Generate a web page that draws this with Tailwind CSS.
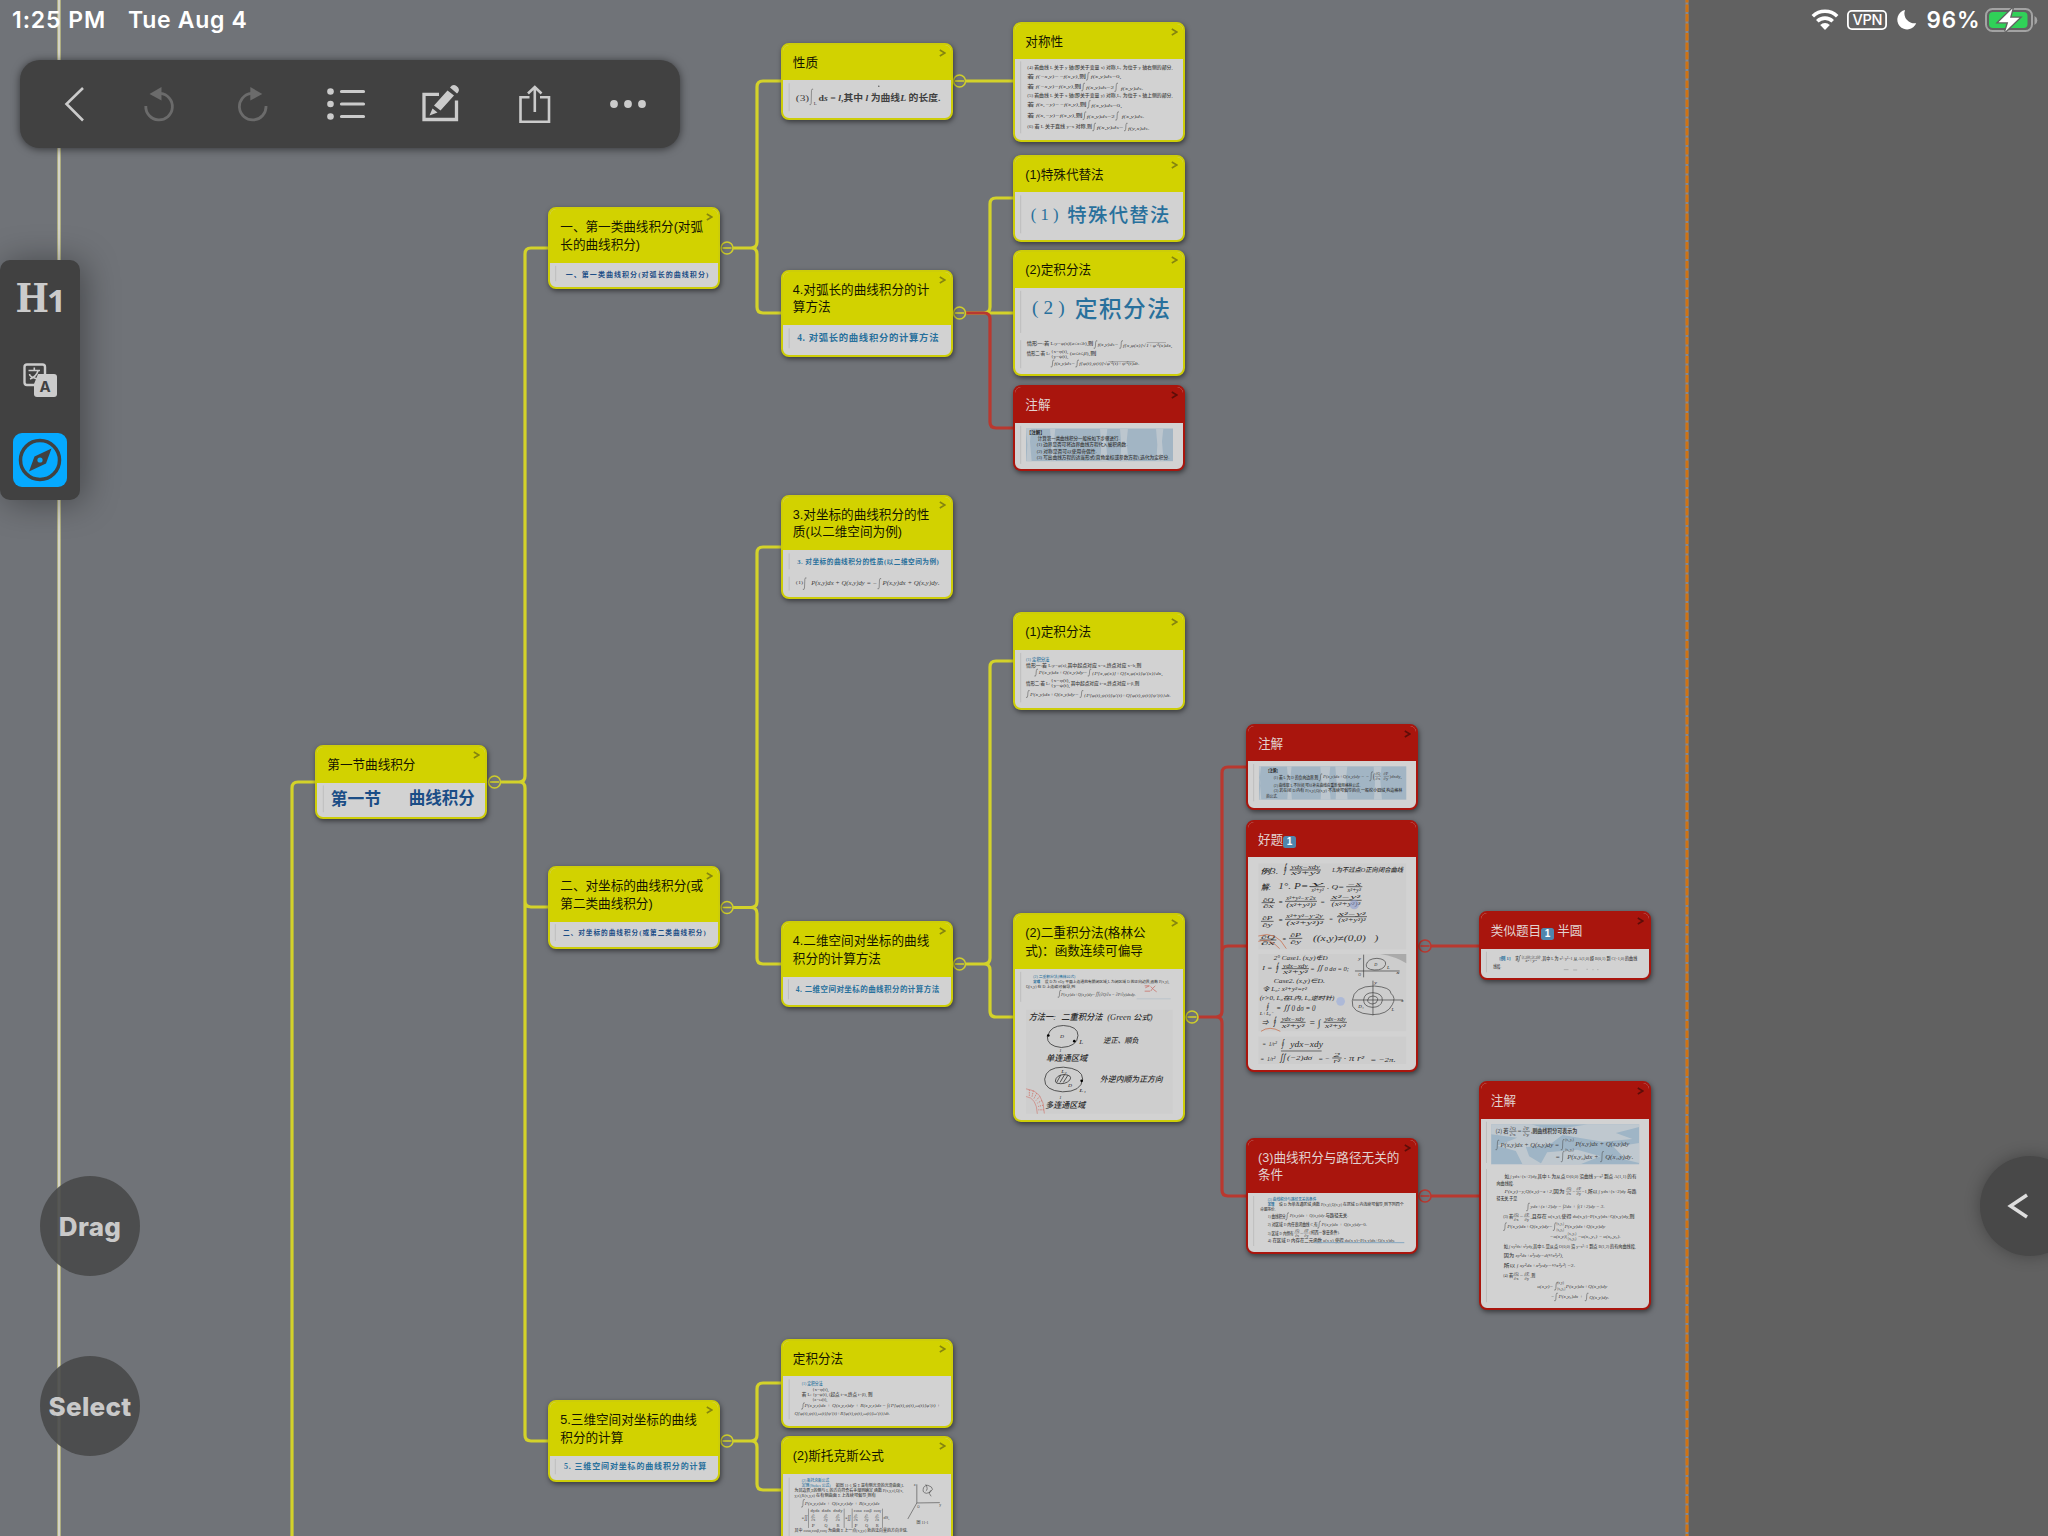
<!DOCTYPE html>
<html lang="zh-CN">
<head>
<meta charset="utf-8">
<title>曲线积分</title>
<script src="https://cdn.jsdelivr.net/npm/@tailwindcss/browser@4"></script>
</head>
<body class="w-[2048px] h-[1536px] overflow-hidden bg-[#707378]">
<main class="relative w-[2048px] h-[1536px] overflow-hidden font-['Inter','Noto_Sans_CJK_SC',sans-serif]">
  <!-- side panel and page guides -->
  <div class="absolute left-[1688px] top-0 w-[360px] h-full bg-[#616161]"></div>
  <svg class="absolute inset-0" width="2048" height="1536" fill="none">
    <path d="M1687 0V1536" stroke="#85888e" stroke-width="3"/>
    <path d="M1687 0V1536" stroke="#cf7212" stroke-width="3" stroke-dasharray="7.500 2" stroke-dashoffset="5"/>
    <path d="M59 0V1536" stroke="#a9a878" stroke-width="4"/>
    <path d="M59 0V1536" stroke="#d3d3c8" stroke-width="2.2"/>
    <g stroke="#d3d22a" stroke-width="3.2">
      <path d="M315 782H298q-6 0-6 6V1536"/>
      <path d="M501 782H519q6 0 6-6V254q0-6 6-6H549M501 782H519q6 0 6 6V901q0 6 6 6H549M525 800V1435q0 6 6 6H549"/>
      <path d="M733 248H751q6 0 6-6V87q0-6 6-6H781M751 248q6 0 6 6V307q0 6 6 6H781"/>
      <path d="M733 907.5H751q6 0 6-6V553q0-6 6-6H781M751 907.5q6 0 6 6V958q0 6 6 6H781"/>
      <path d="M733 1441H751q6 0 6-6V1389q0-6 6-6H781M751 1441q6 0 6 6V1484q0 6 6 6H781"/>
      <path d="M965 81H1014M965 313H1014M984 313q6 0 6-6V204q0-6 6-6H1014"/>
      <path d="M965 964H984q6 0 6-6V667q0-6 6-6H1014M984 964q6 0 6 6V1011q0 6 6 6H1014"/>
    </g>
    <g stroke="#b9382f" stroke-width="3.2">
      <path d="M965 313H984q6 0 6 6V422q0 6 6 6H1014"/>
      <path d="M1198 1017H1216q6 0 6-6V773q0-6 6-6H1247M1222 960V952q0-6 6-6H1247M1216 1017q6 0 6 6V1190q0 6 6 6H1247"/>
      <path d="M1431 946H1480M1431 1196H1480"/>
    </g>
    <g id="joints" fill="#707378" stroke-width="1.6"></g>
  </svg>

  <div id="cards"></div>

  <!-- status bar -->
  <header class="absolute inset-x-0 top-0 h-10 flex items-center justify-between text-white font-semibold text-[23px] leading-10">
    <div class="flex pl-3 gap-[22px]"><span class="tracking-[0.9px]">1:25 PM</span><span class="tracking-[0.7px]">Tue Aug 4</span></div>
    <svg width="240" height="40" viewBox="1808 0 240 40" fill="none">
      <g stroke="#fff" stroke-width="3.6"><path d="M1812.8 16.2a17.6 17.6 0 0 1 24.4 0"/><path d="M1817.3 21.3a11 11 0 0 1 15.4 0"/></g>
      <path d="M1825 30l-4.8-5a6.8 6.8 0 0 1 9.6 0z" fill="#fff"/>
      <rect x="1847.9" y="10.9" width="38.2" height="18.2" rx="4" stroke="#fff" stroke-width="1.8"/>
      <text x="1852.5" y="25.4" font-size="14.5" textLength="30" fill="#fff" font-weight="500">VPN</text>
      <path d="M1905 10a9.8 9.8 0 1 0 11.2 13.2a10 10 0 0 1-11.2-13.2z" fill="#fff"/>
      <text x="1926.5" y="28" font-size="22.5" textLength="53" fill="#fff" font-weight="600">96%</text>
      <rect x="1986" y="9" width="46" height="22" rx="6.5" stroke="#a3a3a3" stroke-width="2"/>
      <path d="M2034.5 16a5 5 0 0 1 0 9z" fill="#a3a3a3"/>
      <rect x="1989" y="12" width="38.500" height="16" rx="4" fill="#30d158"/>
      <path d="M2012.500 8.500L1998.500 22.200H2008.200L2005.300 31.500L2019.500 17.800H2010z" fill="#fff" stroke="#616161" stroke-width="2.6" paint-order="stroke"/>
    </svg>
  </header>

  <!-- toolbar -->
  <nav class="absolute left-5 top-[60px] w-[660px] h-[88px] rounded-[20px] bg-[#414141] shadow-[0_1px_9px_rgba(0,0,0,0.55)]">
    <svg width="660" height="88" viewBox="20 60 660 88" fill="none" stroke="#cbcbcb" stroke-width="2.6">
      <path d="M83 88L66.500 104L83 120.500"/>
      <g stroke="#6b6b6b" stroke-width="2.800"><path d="M145.800 106a13.300 13.300 0 1 0 14.600-12.600"/><path d="M161.500 87v13.500l-12-6.500z" fill="#6b6b6b" stroke="none"/>
      <path d="M266 106a13.300 13.300 0 1 1-14.600-12.600"/><path d="M250.300 87v13.500l12-6.500z" fill="#6b6b6b" stroke="none"/></g>
      <path d="M341.500 91.500H363.500M341.500 104H363.500M341.500 116.500H363.500" stroke-width="3.200" stroke-linecap="round"/>
      <g fill="#cbcbcb" stroke="none"><circle cx="330.500" cy="91.500" r="3.300"/><circle cx="330.500" cy="104" r="3.300"/><circle cx="330.500" cy="116.500" r="3.300"/>
      <circle cx="614" cy="104" r="3.900"/><circle cx="628" cy="104" r="3.900"/><circle cx="642" cy="104" r="3.900"/></g>
      <path d="M439 94.300H424V119.500H456.500V100.500" stroke-width="3.300"/>
      <path d="M447.500 90.500L454 95.500L440.500 110.500L434 105.500zM450 87.500q3-4 6.500-1.500q4 3 1.500 6.500l-1 1zM432.500 108.500l5 4l-8 3z" fill="#cbcbcb" stroke="none"/>
      <path d="M529.500 97.300H520.500V121.700H549V97.300H540M534.800 112V88M528 93.500L534.800 87L541.500 93.500"/>
    </svg>
  </nav>

  <aside class="absolute left-0 top-[260px] w-20 h-60 rounded-[10px] bg-[#414141] shadow-[4px_2px_34px_rgba(0,0,0,0.4)]">
    <svg width="80" height="240" viewBox="0 260 80 240" fill="none">
      <text x="15.500" y="312" font-size="38.500" font-weight="700" fill="#cbcbcb" textLength="33.500" lengthAdjust="spacingAndGlyphs" class="font-['DejaVu_Serif',serif]">H</text>
      <text x="47" y="311.500" font-size="31" font-weight="700" fill="#cbcbcb" textLength="19" lengthAdjust="spacingAndGlyphs" class="font-['Open_Sans',sans-serif]">1</text>
      <rect x="24.500" y="364.500" width="20.500" height="20.500" rx="2.500" stroke="#cbcbcb" stroke-width="2.400"/>
      <path d="M28.500 370.500H40M34.300 367.500V370.500M29.500 374q0 3 8 5M38 371q-2 6-8 8" stroke="#cbcbcb" stroke-width="1.600"/>
      <path d="M38 374H54a3 3 0 0 1 3 3v17a3 3 0 0 1-3 3H37a3 3 0 0 1-3-3V384z" fill="#cbcbcb"/>
      <text x="39.500" y="391.500" font-size="15" font-weight="700" fill="#414141">A</text>
      <rect x="13" y="433" width="54" height="54" rx="9" fill="#05a9ff"/>
      <circle cx="40" cy="460" r="19.500" stroke="#414141" stroke-width="3.500"/>
      <path d="M51.500 448.500L46 463.500L29 471.500L34.500 456.500z" fill="#414141"/><circle cx="40" cy="460" r="2.600" fill="#05a9ff"/>
    </svg>
  </aside>

  <button class="absolute left-10 top-[1176px] size-[100px] rounded-full bg-[#484949]/90 text-[#c9c9c9] font-extrabold text-[26px] tracking-[0.3px]">Drag</button>
  <button class="absolute left-10 top-[1356px] size-[100px] rounded-full bg-[#484949]/90 text-[#c9c9c9] font-extrabold text-[26px] tracking-[0.3px]">Select</button>
  <button class="absolute left-[1980px] top-[1156px] size-[100px] rounded-full bg-[#484848] shadow-[0_0_16px_rgba(0,0,0,0.3)]">
    <svg width="100" height="100" viewBox="0 0 100 100" fill="none" stroke="#dedede" stroke-width="3.500"><path d="M47 39L30.500 50L47 61"/></svg>
  </button>
</main>

<script>
const INK = '#3f3f3f', BLUE = '#28709c', NAVY = '#1b4d86';

// line of printed text: left, vertical centre, size, text, drawn length
const T = (x, cy, s, str, len, fill = INK, w = 500) =>
  `<text x="${x}" y="${cy + s * 0.35}" font-size="${s}" textLength="${len}" lengthAdjust="spacingAndGlyphs" fill="${fill}" font-weight="${w}">${str}</text>`;
// heading spread over its length without stretching the glyphs
const S = (x, cy, s, str, len, fill = BLUE, w = 500) =>
  `<text x="${x}" y="${cy + s * 0.35}" font-size="${s}" textLength="${len}" fill="${fill}" font-weight="${w}">${str}</text>`;
// handwritten text
const H = (x, cy, s, str, len) =>
  `<text x="${x}" y="${cy + s * 0.35}" font-size="${s}" textLength="${len}" lengthAdjust="spacingAndGlyphs" fill="#2c2c2c" font-style="italic" font-weight="500">${str}</text>`;
// handwritten fraction
const F = (x, cy, w, a, b) => H(x + 4, cy - 9, 17, a, w - 8) + H(x + 4, cy + 10, 17, b, w - 8) +
  `<path d="M${x} ${cy}h${w}" stroke="#2c2c2c" stroke-width="2"/>`;
const I = (x, y, h) => `<path d="M${x + 6} ${y + 2}q-4-3-5 4L${x} ${y + h - 6}q-1 7-5 4" fill="none" stroke="#444" stroke-width="1.5"/>`;
// left margin mark of a clipped excerpt
const M = (x, y, h) => `<path d="M${x} ${y}v${h}" stroke="#b4b4b4" stroke-width="2"/>`;
const wash = (x, y, w, h, bands) => `<rect x="${x}" y="${y}" width="${w}" height="${h}" fill="#a2b5c4"/>` +
  bands.map(([bx, bw]) => `<path d="M${bx} ${y}h${bw}l-4 ${h * .4}l5 ${h * .6}h-${bw}l3-${h * .5}z" fill="#bcc6ce"/>`).join('');

const Y = 'y', R = 'r', ONE = '<span class="inline-flex items-center justify-center align-[-1.5px] w-[12.5px] h-[12.5px] rounded-[2.5px] bg-[#4f86ad] text-white text-[10px] leading-none font-bold">1</span>';

const cards = [
 { x:315,y:745,h:74,hd:37.500,c:Y,t:'第一节曲线积分',o:[280,720],
   s:M(130,195,80)+T(152,236,50,'第一节',151,NAVY,600)+T(386,232,50,'曲线积分',198,NAVY,600) },
 { x:548,y:207.300,h:82,hd:55.500,c:Y,t:'一、第一类曲线积分(对弧<br>长的曲线积分)',o:[0,0],
   s:M(1667,797,46)+S(1697,822,21,'一、第一类曲线积分(对弧长的曲线积分)',428,NAVY,700) },
 { x:548,y:866.300,h:83,hd:55.500,c:Y,t:'二、对坐标的曲线积分(或<br>第二类曲线积分)',o:[280,720],
   s:M(826,612,50)+S(849,638,20,'二、对坐标的曲线积分(或第二类曲线积分)',428,NAVY,700) },
 { x:548,y:1400.200,h:82,hd:55.500,c:Y,t:'5.三维空间对坐标的曲线<br>积分的计算',o:[540,1330],
   s:M(46,386,46)+S(72,409,24,'5. 三维空间对坐标的曲线积分的计算',427,BLUE,700) },
 { x:780.500,y:42.600,h:77,hd:37.500,c:Y,t:'性质',o:[760,0],
   s:M(86,250,84)+T(106,294,25,'(3)',40)+I(152,266,50)+T(160,312,12,'L',9)+T(174,295,26,'<tspan>d</tspan><tspan font-style="italic">s</tspan> = <tspan font-style="italic">l</tspan>,其中 <tspan font-style="italic">l</tspan> 为曲线<tspan font-style="italic">L</tspan> 的长度.',366,INK,600)+'<circle cx="355" cy="259" r="2" fill="#444"/>' },
 { x:780.500,y:269.500,h:87.500,hd:55.500,c:Y,t:'4.对弧长的曲线积分的计<br>算方法',o:[760,0],
   s:M(86,985,60)+S(110,1013,28,'4. 对弧长的曲线积分的计算方法',424,BLUE,700) },
 { x:780.500,y:494.500,h:104,hd:55.500,c:Y,t:'3.对坐标的曲线积分的性<br>质(以二维空间为例)',o:[760,480],
   s:M(86,220,48)+S(110,245,20,'3. 对坐标的曲线积分的性质(以二维空间为例)',425,BLUE,700)+M(86,290,42)+T(106,308,15,'(1)',22)+I(132,292,38)+T(152,309,17,'<tspan font-style="italic">P(x,y)dx + Q(x,y)dy = −</tspan>',198)+I(356,294,34)+T(366,310,17,'<tspan font-style="italic">P(x,y)dx + Q(x,y)dy</tspan>.',171) },
 { x:780.500,y:921.200,h:86,hd:55.500,c:Y,t:'4.二维空间对坐标的曲线<br>积分的计算方法',o:[280,720],
   s:M(1524,777,60)+S(1546,808,22.500,'4. 二维空间对坐标的曲线积分的计算方法',430,BLUE,700) },
 { x:780.500,y:1338.500,h:89,hd:37.500,c:Y,t:'定积分法',o:[540,1330],
   s:M(746,148,120)+T(784,161,13,'(1) 定积分法',62,BLUE)+T(815,177,13,'{x=φ(t),',50)+T(784,192,13,'若 L: {y=ψ(t), (起点 t=α,终点 t=β), 则',212)+T(815,208,13,'{z=ω(t),',46)+I(787,217,22)+T(792,227,15,'<tspan font-style="italic">P(x,y,z)dx + Q(x,y,z)dy + R(x,y,z)dz</tspan> = ∫<tspan font-style="italic">{P[φ(t),ψ(t),ω(t)]φ′(t) +</tspan>',408)+T(762,251,14,'<tspan font-style="italic">Q[φ(t),ψ(t),ω(t)]ψ′(t)+R[φ(t),ψ(t),ω(t)]ω′(t)}dt</tspan>.',286) },
 { x:780.500,y:1436.200,h:130,hd:37.500,c:Y,t:'(2)斯托克斯公式',o:[540,1330],
   s:M(746,442,180)+T(784,452,12,'(2) 斯托克斯公式',82,BLUE)+T(784,467,12,'定理(Stokes 公式)',86,BLUE)+T(886,467,12,'如图 11-1,设 Σ 是有侧光滑的光滑曲面,L',204)+T(762,482,12,'为其边界,Σ的侧与 L 的方向符合右手规则确定,函数 P(x,y,z),Q(x,',326)+T(762,497,12,'y,z),R(x,y,z) 在有侧曲面 Σ 上连续可偏导,则有',244)+I(787,506,26)+T(793,519,15,'<tspan font-style="italic">P(x,y,z)dx + Q(x,y,z)dy + R(x,y,z)dz</tspan>',224)
    +T(784,562,18,'=∬',18)+T(914,562,18,'=∬',18)+'<path d="M804 535v58M911 535v58M935 535v58M1026 535v58" stroke="#555" stroke-width="1.500"/>'
    +T(810,541,12,'dydz&#160; dzdx&#160; dxdy',96)+T(940,541,12,'cosα&#160; cosβ&#160; cosγ',82)
    +[818,856,892,946,978,1010].map((x,i)=>T(x-5,556,11,'∂',9)+T(x-6,569,11,['∂x','∂y','∂z'][i%3],12)+`<path d="M${x-7} 562h13" stroke="#555"/>`+T(x-4,585,12,'PQR'[i%3],9)).join('')
    +T(1029,562,13,'dS,',18)+T(762,602,12,'其中 cosα,cosβ,cosγ 为曲面 Σ 上一点(x,y,z) 处的法向量的方向余弦.',340)
    +'<path d="M1129 462V518L1102 566M1129 518L1198 517M1148 478q0-12 14-13q14 4 14 12q-6 12-18 12q-12-2-10-11M1156 462q8 16 0 20M1170 480q-8 10 2 18" fill="none" stroke="#444" stroke-width="1.800"/>'+T(1120,462,12,'z',6)+T(1196,522,12,'y',6)+T(1130,529,10,'O',7)+T(1128,576,12,'图 11-1',36) },
 { x:1013,y:21.500,h:120,hd:37.500,c:Y,t:'对称性',o:[1000,0],
   s:M(62,184,216)+T(82,203,13,'(4) 若曲线 L 关于 y 轴(即关于变量 x) 对称,L₁ 为位于 y 轴右侧的部分,',436)+T(82,228,14,'若 <tspan font-style="italic">f(−x,y)=−f(x,y)</tspan>,则',176)+I(263,216,26)+T(272,230,14,'<tspan font-style="italic">f(x,y)ds</tspan>=0,',92)
    +T(82,260,14,'若 <tspan font-style="italic">f(−x,y)=f(x,y)</tspan>,则',162)+I(249,248,26)+T(258,262,14,'<tspan font-style="italic">f(x,y)ds</tspan>=2',84)+I(348,248,28)+T(362,264,14,'<tspan font-style="italic">f(x,y)ds</tspan>.',68)
    +T(82,287,13,'(5) 若曲线 L 关于 x 轴(即关于变量 y) 对称,L₁ 为位于 x 轴上侧的部分,',436)+T(82,313,14,'若 <tspan font-style="italic">f(x,−y)=−f(x,y)</tspan>,则',178)+I(266,300,26)+T(274,315,14,'<tspan font-style="italic">f(x,y)ds</tspan>=0,',92)
    +T(82,346,14,'若 <tspan font-style="italic">f(x,−y)=f(x,y)</tspan>,则',166)+I(253,334,26)+T(260,348,14,'<tspan font-style="italic">f(x,y)ds</tspan>=2',84)+I(351,334,28)+T(365,350,14,'<tspan font-style="italic">f(x,y)ds</tspan>.',68)
    +T(82,380,14,'(6) 若 L 关于直线 y=x 对称,则',194)+I(282,368,26)+T(290,382,14,'<tspan font-style="italic">f(x,y)ds</tspan>=',80)+I(377,368,26)+T(384,384,14,'<tspan font-style="italic">f(y,x)ds</tspan>.',64) },
 { x:1013,y:154.500,h:87,hd:37.500,c:Y,t:'(1)特殊代替法',o:[1000,0],
   s:M(62,586,114)+S(92,642,50,'(1)',84)+S(202,646,58,'特殊代替法',306) },
 { x:1013,y:250.300,h:126,hd:37.500,c:Y,t:'(2)定积分法',o:[1000,230],
   s:M(62,182,126)+S(96,232,58,'(2)',98)+S(224,238,68,'定积分法',286)+M(62,330,84)
    +T(80,341,13,'情形一:若 L:<tspan font-style="italic">y=φ(x)</tspan>(<tspan font-style="italic">a≤x≤b</tspan>),则',200)+I(286,330,26)+T(293,343,14,'<tspan font-style="italic">f(x,y)ds=</tspan>',62)+I(363,330,26)+T(369,345,14,'<tspan font-style="italic">f[x,φ(x)]√1+φ′²(x)dx</tspan>,',148)
    +T(80,369,13,'情形二:若 L:',70)+T(153,363,12,'{x=φ(t),',52)+T(153,378,12,'{y=ψ(t),',52)+T(209,371,14,'(<tspan font-style="italic">α≤t≤β</tspan>),则',80)+I(157,388,24)+T(163,400,14,'<tspan font-style="italic">f(x,y)ds=</tspan>',62)+I(231,388,24)+T(238,401,14,'<tspan font-style="italic">f[φ(t),ψ(t)]√φ′²(t)+ψ′²(t)dt</tspan>.',180)
    +'<path d="M440 337h58M325 394h80" stroke="#555"/>' },
 { x:1013,y:385,h:86,hd:37.500,c:R,t:'注解',o:[1000,230],
   s:M(62,586,114)+wash(78,594,441,98,[[78,16],[150,16],[300,22],[360,24],[468,22]])+T(80,604,15,'【注解】',54,'#222',700)+T(113,624,13,'计算第一类曲线积分一般按如下步骤进行.',246,'#333')+T(110,643,13,'(1) 边界是否可将边界曲线方程代入被积函数.',272,'#333')+T(110,662,13,'(2) 对称是否可以使用奇偶性.',180,'#333')+T(110,680,13,'(3) 写出曲线方程的适当形式(直角坐标或参数方程),选代为定积分.',398,'#333') },
 { x:1013,y:612.200,h:98,hd:37.500,c:Y,t:'(1)定积分法',o:[760,480],
   s:M(782,518,148)+T(798,537,13,'(1) 定积分法',70,BLUE)+T(798,554,14,'情形一:若 L:<tspan font-style="italic">y=φ(x)</tspan>,其中起点对应 x=a,终点对应 x=b,则',346)+I(828,565,24)+T(836,577,15,'<tspan font-style="italic">P(x,y)dx+Q(x,y)dy=</tspan>',146)+I(988,565,24)+T(996,578,15,'<tspan font-style="italic">{P[x,φ(x)]+Q[x,φ(x)]φ′(x)}dx</tspan>,',212)
    +T(798,608,14,'情形二:若 L:',72)+T(872,600,13,'{x=φ(t),',58)+T(872,617,13,'{y=ψ(t),',58)+T(932,609,14,'其中起点对应 t=α,终点对应 t=β,则',206)+I(803,629,24)+T(810,641,15,'<tspan font-style="italic">P(x,y)dx+Q(x,y)dy=</tspan>',146)+I(964,629,24)+T(972,644,15,'<tspan font-style="italic">{P[φ(t),ψ(t)]φ′(t)+Q[φ(t),ψ(t)]ψ′(t)}dt</tspan>.',260) },
 { x:1013,y:913,h:208.500,hd:55.500,c:Y,t:'(2)二重积分法(格林公<br>式)：函数连续可偏导',o:[980,900],
   s:M(122,214,90)+'<rect x="138" y="328" width="440" height="312" fill="#cecece"/>'+T(160,228,11,'(2) 二重积分法(格林公式)',126,BLUE)+T(160,243,11,'定理',20,BLUE,700)+T(194,243,11,'设 D 为 xOy 平面上连通的有限闭区域,L 为闭区域 D 的正向边界,函数 P(x,y),',374)+T(138,259,11,'Q(x,y) 在 D 上连续可偏导,则',148)+I(238,268,24)+T(243,280,15,'<tspan font-style="italic">P(x,y)dx+Q(x,y)dy=∬(∂Q/∂x − ∂P/∂y)dxdy</tspan>.',224)
    +'<path d="M470 295h102" stroke="#8ba6bb"/><path d="M494 256h14l-12 6M494 272h16M512 272q6-10 14-16M512 258q8 10 18 16" stroke="#c9766f" fill="none" stroke-width="2.500"/>'
    +H(146,350,27,'方法一:',82)+H(244,350,26,'二重积分法',124)+H(382,350,22,'(Green 公式)',136)
    +'<g fill="none" stroke="#333" stroke-width="2.400"><path d="M204 404q8-28 46-29q44 2 44 30q-2 34-50 36q-44-4-42-34zM194 536q4-36 56-36q58 4 58 36q-4 38-60 38q-56-4-54-38zM226 542q2-18 26-20q26 2 18 16q-14 16-40 10z"/><path d="M230 546l12-22M240 546l14-24M250 546l14-22"/></g><circle cx="205" cy="405" r="4"/><circle cx="283" cy="422" r="4"/><circle cx="305" cy="541" r="4"/>'
    +H(240,408,14,'D',12)+H(298,424,16,'L',12)+H(370,420,22,'逆正、顺负',106)+H(198,474,25,'单连通区域',124)+H(244,514,12,'L₂',16)+H(264,554,14,'D',12)+H(298,569,14,'L₁',20)+H(238,450,12,'1',7)+H(238,590,12,'1',7)+H(360,536,24,'外逆内顺为正方向',188)+H(196,615,25,'多连通区域',120)
    +'<g fill="none" stroke="#cf7c74" stroke-width="2"><path d="M138 565q54 4 55 74M138 588q32 4 34 52"/><path d="M148 568v18M160 571l-4 18M170 578l-8 16M179 588l-11 12M186 600l-14 8M190 614l-16 4M192 628h-17" stroke-width="3" stroke-dasharray="4 3"/></g>' },
 { x:1245.700,y:723.500,h:86,hd:37.500,c:R,t:'注解',o:[1220,710],
   s:M(100,162,112)+wash(116,169,442,100,[[116,6],[200,14],[300,30],[345,36],[460,24]])+T(138,180,13,'【注解】',40,'#222',700)+T(160,201,13,'(1) 若 L 为 D 的负向边界,则',134,'#333')+I(300,190,24)+T(308,199,15,'<tspan font-style="italic">P(x,y)dx+Q(x,y)dy = −</tspan>',138)+I(452,184,30)+T(458,199,22,'(',6)+T(466,192,12,'∂Q',14)+T(466,206,12,'∂x',14)+'<path d="M464 199h18M490 199h16" stroke="#444"/>'+T(490,192,12,'∂P',14)+T(490,206,12,'∂y',14)+T(508,199,14,')dxdy,',36)
    +T(160,227,12,'(2) 曲线取 L 不封闭,可以补充曲线应重新使用格林公式.',260,'#333')+T(160,242,12,'(3) 若在闭 D 内有 P(x,y),Q(x,y) 不连续可偏导的点,一般挖小圆域,构造格林',386,'#333')+T(138,260,12,'的公式.',34,'#333') },
 { x:1245.700,y:819.500,h:252.500,hd:37.500,c:R,t:'好题'+ONE,nochev:1,o:[1220,710],
   s:'<g fill="#cdcdcd"><rect x="114" y="460" width="444" height="258"/><rect x="114" y="732" width="444" height="232"/><rect x="114" y="980" width="444" height="82"/></g><path d="M480 732h78v28q-30-20-78-28z" fill="#aaa"/>'
    +H(120,484,22,'例3.',54)+H(184,480,38,'∮',18)+F(208,480,94,'ydx−xdy','x²+y²')+H(336,480,19,'L为不过点O正向闭合曲线',212)
    +H(122,532,24,'解:',30)+H(174,530,22,'1°. P=',90)+F(270,530,44,'y','x²+y²')+H(320,530,20,'. Q=',52)+F(378,530,48,'−x','x²+y²')
    +F(124,578,40,'∂Q','∂x')+H(174,576,22,'=',14)+F(194,574,96,'x²+y²−x·2x','(x²+y²)²')+H(300,574,20,'=',14)+F(330,571,94,'x²−y²','(x²+y²)²')
    +F(122,634,38,'∂P','∂y')+H(174,632,22,'=',14)+F(194,628,118,'x²+y²−y·2y','(x²+y²)²')+H(326,626,20,'=',12)+F(350,620,90,'x²−y²','(x²+y²)²')
    +F(118,690,50,'∂Q','∂x')+H(186,688,22,'=',12)+F(206,685,40,'∂P','∂y')+H(278,686,24,'((x,y)≠(0,0)&#160;&#160; )',196)
    +'<circle cx="402" cy="584" r="14" fill="#8f9fd0" opacity=".6"/><circle cx="361" cy="874" r="13" fill="#9fb0dc" opacity=".7"/>'
    +'<g fill="none" stroke="#c9603a" stroke-width="2"><path d="M114 678q54-18 84 38M114 694q34-12 64 22M122 964q26-18 58 0"/></g>'
    +H(160,743,18,'2° Case1. (x,y)∉D',162)+H(126,774,20,'I =',30)+H(162,774,34,'∮',16)+F(184,776,82,'ydx−xdy','x²+y²')+H(270,776,20,'= ∬ 0 dσ = 0;',116)
    +H(160,814,18,'Case2. (x,y)∈D.',154)+H(126,838,18,'令 L₀: x²+y²=r²',134)+H(118,864,16,'(r&gt;0, L₀在L内, L₀逆时针)',224)+H(134,892,26,'∮',14)+H(118,912,12,'L+L₀⁻',38)+H(168,896,22,'= ∬ 0 dσ = 0',118)
    +H(124,938,22,'⇒',20)+H(154,936,34,'∮',16)+F(180,937,76,'ydx−xdy','x²+y²')+H(266,938,28,'= ∫',34)+F(310,937,70,'ydx−xdy','x²+y²')
    +'<g fill="none" stroke="#3a3a3a" stroke-width="2"><path d="M430 734v68M404 783h134M458 812v104M398 870h150M438 764q4-18 32-19q28 2 26 18q-6 18-34 17q-26-2-24-16zM396 872q4-44 66-44q50 4 50 22q16 14 4 34q-14 30-60 30q-66-4-60-42zM430 870q2-22 28-22q30 2 28 24q-4 20-30 20q-26-2-26-22zM442 870q2-12 16-12q16 2 14 12q-2 12-16 12q-14-2-14-12z"/></g>'
    +H(414,744,14,'y',8)+H(414,792,14,'O',8)+H(528,786,14,'x',10)+H(462,764,12,'D',9)+H(500,772,12,'L',8)+H(414,890,14,'D₁',16)+H(514,900,12,'L',8)+H(542,872,12,'x',8)+H(462,818,12,'y',8)
    +H(126,1002,20,'=&#160; 1/r²',44)+H(178,1002,32,'∮',16)+H(210,1002,24,'ydx−xdy',98)+'<path d="M182 1023h122" stroke="#333" stroke-width="2"/>'
    +H(120,1046,20,'=&#160; 1/r²',46)+H(176,1046,30,'∬',20)+H(200,1044,20,'(−2)dσ',76)+H(294,1046,20,'= −',34)+F(336,1044,28,'2','r²')+H(370,1044,22,'· π r²',62)+H(450,1048,20,'= −2π.',76) },
 { x:1245.700,y:1137.500,h:116.500,hd:55.500,c:R,t:'(3)曲线积分与路径无关的<br>条件',o:[1220,900],
   s:M(100,888,150)+T(142,899,12,'(3) 曲线积分与路径无关的条件',146,BLUE)+T(142,915,12,'定理',20,BLUE,700)+T(176,914,12,'设 D 为单连通区域,函数 P(x,y),Q(x,y) 在区域 D 内连续可偏导,则下列四个',374)+T(120,930,12,'命题等价.',46)
    +T(142,948,13,'1) 曲线积分',54)+I(200,937,24)+T(208,947,14,'<tspan font-style="italic">P(x,y)dx + Q(x,y)dy</tspan> 与路径无关.',176)+T(142,973,13,'2) 对区域 D 内任意闭曲线 C,有',150)+I(296,962,24)+T(304,972,15,'<tspan font-style="italic">P(x,y)dx + Q(x,y)dy</tspan>=0.',136)
    +T(142,999,13,'3) 区域 D 内恒有',78)+T(224,992,12,'∂Q',13)+T(224,1006,12,'∂x',13)+T(239,999,14,'=',10)+T(252,992,12,'∂P',13)+T(252,1006,12,'∂y',13)+'<path d="M222 999h15M250 999h15" stroke="#444"/>'+T(268,998,13,'(柯西－黎曼条件).',90)+T(142,1020,13,'4) 在区域 D 内存在二元函数 u(x,y),使得 du(x,y)=P(x,y)dx+Q(x,y)dy.',382)+'<path d="M280 1028h272" stroke="#86a7c0" stroke-width="3"/>' },
 { x:1478.500,y:911.200,h:69,hd:37.500,c:R,t:'类似题目'+ONE+' 半圆',o:[1220,900],
   s:M(798,154,62)+T(836,174,15,'[例 1]',34,BLUE,700)+T(884,174,13,'求',10)+I(896,164,22)+T(904,168,12,'<tspan font-style="italic">(x+y)dx−(x−y)dy</tspan>',56)+'<path d="M904 175h54" stroke="#555"/>'+T(914,182,12,'<tspan font-style="italic">x²+y²</tspan>',34)+T(962,174,13,',其中 L 为 x²+y²=1 从 A(1,0) 经 B(0,1) 到 C(−1,0) 的曲线',288)+T(818,198,13,'线段.',24)+'<path d="M1030 208h14M1058 209h12M1098 207h4M1116 208h3M1130 208h4" stroke="#999" stroke-width="2"/>' },
 { x:1478.500,y:1081.200,h:228.500,hd:37.500,c:R,t:'注解',o:[1220,900],
   s:M(798,664,124)+'<rect x="812" y="672" width="444" height="120" fill="#9fb5c6"/><path d="M812 672h120l60 18l110-18h154v8l-70 18l50 18l-90 8l-120-20l-40 30l-70 6l10 28l40 24h-60l-20-40l-56-16l60-24l-78-10zM960 792l20-36l90-8l70 20l-60 24zM1180 740l76-12v60l-40-10z" fill="#bfc8cf"/>'
    +T(826,692,18,'(2) 若',38)+T(868,684,15,'∂Q',18)+T(868,702,15,'∂x',18)+T(891,692,18,'=',12)+T(908,684,15,'∂P',18)+T(908,702,15,'∂y',18)+'<path d="M866 693h22M906 693h22" stroke="#333" stroke-width="1.500"/>'+T(932,692,16,',则曲线积分可表示为',138,INK,600)
    +I(830,718,32)+T(840,732,20,'<tspan font-style="italic">P(x,y)dx + Q(x,y)dy =</tspan>',176)+I(1026,716,34)+T(1034,720,10,'(x₁,y₁)',26)+T(1034,748,10,'(x₀,y₀)',26)+T(1064,730,20,'<tspan font-style="italic">P(x,y)dx + Q(x,y)dy</tspan>',162)+T(1006,768,20,'=',12)+I(1026,752,34)+T(1040,769,20,'<tspan font-style="italic">P(x,y₀)dx +</tspan>',94)+I(1144,752,34)+T(1154,769,20,'<tspan font-style="italic">Q(x₁,y)dy</tspan>.',84)
    +M(798,806,400)
    +T(852,828,13,'如,∫ ydx+(x+2)dy,其中 L 为从点 O(0,0) 沿曲线 y=x² 到点 A(1,1) 的有',396)+T(828,850,13,'向曲线段.',52)+T(852,873,13,'<tspan font-style="italic">P(x,y)=y,Q(x,y)=x+2</tspan>,因为',180)+T(1038,866,12,'∂Q',14)+T(1038,880,12,'∂x',14)+T(1056,873,12,'=',8)+T(1068,866,12,'∂P',14)+T(1068,880,12,'∂y',14)+'<path d="M1036 873h16M1066 873h16" stroke="#444"/>'+T(1084,873,13,'=1,所以 ∫ ydx+(x+2)dy 与路',164)+T(828,896,13,'径无关,于是',62)
    +I(922,907,26)+T(930,919,15,'<tspan font-style="italic">ydx+(x+2)dy =</tspan> ∫<tspan font-style="italic">2dx +</tspan> ∫<tspan font-style="italic">(1+2)dy = 3</tspan>.',222)
    +T(848,949,13,'(3) 若',30)+T(880,942,12,'∂Q',14)+T(880,957,12,'∂x',14)+T(898,949,12,'=',10)+T(912,942,12,'∂P',14)+T(912,957,12,'∂y',14)+'<path d="M878 949h17M910 949h17" stroke="#444"/>'+T(930,949,13,',且存在 u(x,y),使得 du(x,y)=P(x,y)dx+Q(x,y)dy,则',312)
    +I(853,966,26)+T(860,979,15,'<tspan font-style="italic">P(x,y)dx+Q(x,y)dy=</tspan>',136)+I(1002,966,26)+T(1008,970,9,'(x₁,y₁)',22)+T(1008,989,9,'(x₀,y₀)',22)+T(1032,979,15,'<tspan font-style="italic">P(x,y)dx+Q(x,y)dy</tspan>',122)+T(988,1008,14,'<tspan font-style="italic">=u(x,y)|</tspan>',52)+T(1042,1001,9,'(x₁,y₁)',26)+T(1042,1016,9,'(x₀,y₀)',26)+T(1072,1009,14,'<tspan font-style="italic">=u(x₁,y₁) − u(x₀,y₀)</tspan>.',128)
    +T(850,1038,13,'如,∫ xy²dx+x²ydy,其中 L 是从点 O(0,0) 沿 y=x³+1 到点 B(1,2) 的有向曲线段,',396)+T(850,1067,13,'因为 <tspan font-style="italic">xy²dx+x²ydy=d(½x²y²)</tspan>,',178)+T(850,1097,13,'所以 ∫ <tspan font-style="italic">xy²dx+x²ydy=½x²y²|</tspan> =2.',214)
    +T(848,1126,13,'(4) 若',30)+T(880,1119,12,'∂Q',14)+T(880,1134,12,'∂x',14)+T(898,1126,12,'=',10)+T(912,1119,12,'∂P',14)+T(912,1134,12,'∂y',14)+'<path d="M878 1126h17M910 1126h17" stroke="#444"/>'+T(930,1126,13,',则',14)
    +T(950,1157,15,'<tspan font-style="italic">u(x,y)=</tspan>',48)+I(1006,1145,26)+T(1010,1149,9,'(x,y)',20)+T(1010,1167,9,'(x₀,y₀)',24)+T(1036,1158,15,'<tspan font-style="italic">P(x,y)dx+Q(x,y)dy</tspan>',124)+T(992,1189,15,'=',8)+I(1006,1177,26)+T(1014,1189,15,'<tspan font-style="italic">P(x,y₀)dx +</tspan>',74)+I(1098,1177,26)+T(1106,1190,15,'<tspan font-style="italic">Q(x,y)dy</tspan>.',60) },
];

const skin = {
  y: { box: 'absolute w-[172.2px] rounded-[8px] overflow-hidden border-2 border-[#cdcd08] bg-[#d2d2d2] shadow-[1px_2px_5px_rgba(0,0,0,0.5)]', head: 'relative bg-[#d2d200] text-[#141400] pl-[10.3px] pt-[10.2px] text-[12.6px] leading-[17.5px] whitespace-nowrap', chev: '#85850f' },
  r: { box: 'absolute w-[172.2px] rounded-[8px] overflow-hidden border-2 border-[#a9150d] bg-[#d2d2d2] shadow-[1px_2px_5px_rgba(0,0,0,0.5)]', head: 'relative bg-[#a9150d] text-[#e2d2d0] pl-[10.3px] pt-[10.2px] text-[12.6px] leading-[17.5px] whitespace-nowrap', chev: '#5e0d08' },
};
document.getElementById('cards').innerHTML = cards.map(c => {
  const k = skin[c.c], bh = c.h - c.hd - 2;
  const vb = [(c.x + 2 - c.o[0]) * 3, (c.y + c.hd - c.o[1]) * 3, 168.2 * 3, bh * 3].join(' ');
  const chev = c.nochev ? '' : `<svg class="absolute right-[5px] top-[4px]" width="7" height="8" viewBox="0 0 7 8" fill="none" stroke="${k.chev}" stroke-width="1.5"><path d="M.8 1L5.800 4L.8 7"/></svg>`;
  return `<section class="${k.box}" style="left:${c.x}px;top:${c.y}px;height:${c.h}px"><h2 class="${k.head} font-['Liberation_Sans','Noto_Sans_CJK_SC',sans-serif]" style="height:${c.hd - 2}px">${c.t}${chev}</h2><svg class="block font-['Liberation_Serif','Noto_Sans_CJK_SC',serif]" width="168.2" height="${bh}" viewBox="${vb}">${c.s}</svg></section>`;
}).join('');

const joints = [[494.500,782],[727,248],[727,907.500],[727,1441],[959.500,81],[959.500,313],[959.500,964],[1192,1017],[1425,946,1],[1425,1196,1]];
document.getElementById('joints').innerHTML = joints.map(([x, y, red]) =>
  `<g stroke="${red ? '#b9382f' : '#cfce2c'}"><circle cx="${x}" cy="${y}" r="6"/><path d="M${x - 4.500} ${y}h9"/></g>`).join('');
</script>
</body>
</html>
